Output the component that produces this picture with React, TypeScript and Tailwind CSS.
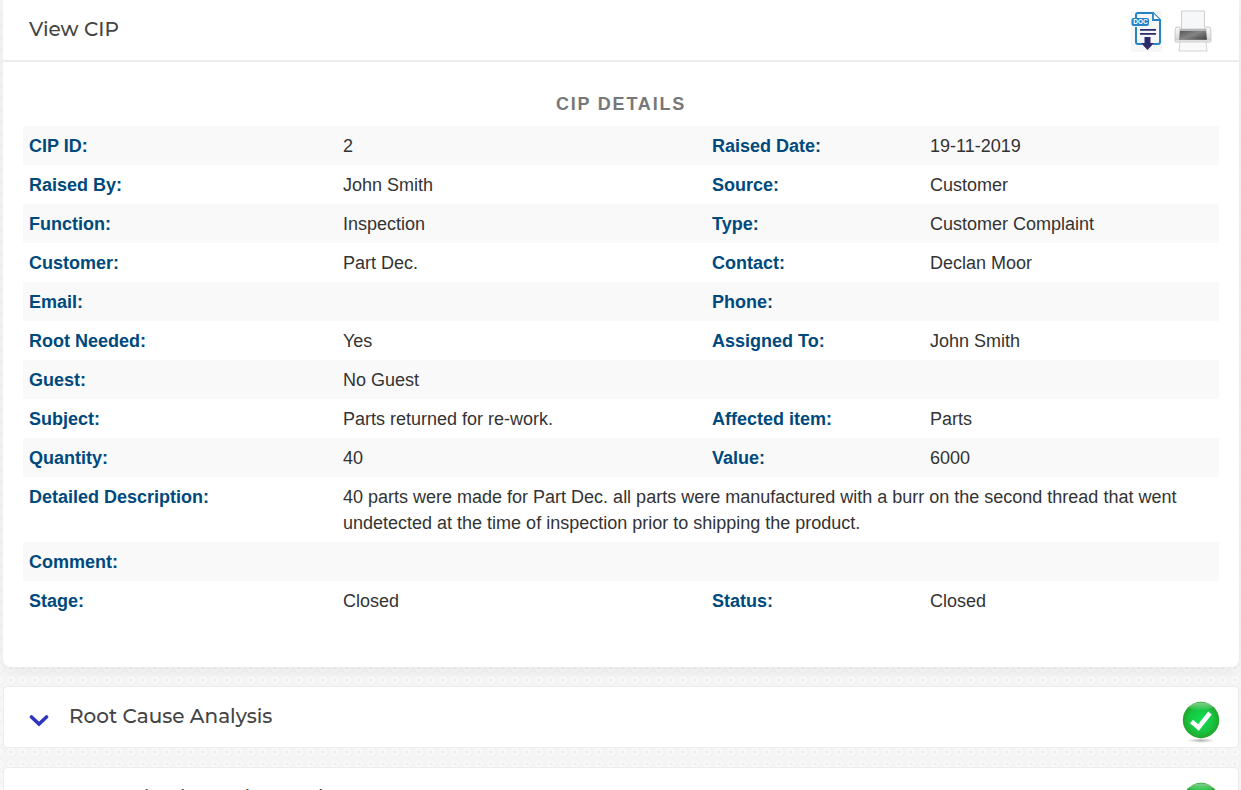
import React, { useState } from "react";

const details = [
  ["CIP ID:", "2", "Raised Date:", "19-11-2019"],
  ["Raised By:", "John Smith", "Source:", "Customer"],
  ["Function:", "Inspection", "Type:", "Customer Complaint"],
  ["Customer:", "Part Dec.", "Contact:", "Declan Moor"],
  ["Email:", "", "Phone:", ""],
  ["Root Needed:", "Yes", "Assigned To:", "John Smith"],
  ["Guest:", "No Guest"],
  ["Subject:", "Parts returned for re-work.", "Affected item:", "Parts"],
  ["Quantity:", "40", "Value:", "6000"],
  [
    "Detailed Description:",
    "40 parts were made for Part Dec. all parts were manufactured with a burr on the second thread that went undetected at the time of inspection prior to shipping the product.",
  ],
  ["Comment:", ""],
  ["Stage:", "Closed", "Status:", "Closed"],
];

const DocIcon = () => (
  <svg viewBox="0 0 31 41" className="h-[41px] w-[31px]" aria-hidden="true">
    <rect width="31" height="41" fill="#f7f7f8" />
    <path
      d="M5 8V4q0-2 2-2h15l7 7v22q0 2-2 2h-5M5 16v15q0 2 2 2h4"
      fill="none"
      stroke="#2583c6"
      strokeWidth="2"
    />
    <path d="M22 2v7h7" fill="#fff" stroke="#2583c6" strokeWidth="1.8" />
    <rect x="0.5" y="7" width="17.5" height="8" rx="2" fill="#2583c6" />
    <text
      x="9.5"
      y="13.3"
      textAnchor="middle"
      fontSize="6.5"
      fontWeight="700"
      fontFamily="Liberation Sans, sans-serif"
      fill="#fff"
    >
      DOC
    </text>
    <path d="M9 18.8h16M9 22.8h16" stroke="#2b2a6c" strokeWidth="1.7" />
    <path d="M13.5 26h6v6h3.5l-6.5 7-6.5-7h3.5z" fill="#2b2a6c" />
  </svg>
);

const PrinterIcon = () => (
  <svg viewBox="0 0 38 42" className="h-[42px] w-[38px]" aria-hidden="true">
    <defs>
      <linearGradient id="slot" x1="0" y1="0" x2="1" y2="1">
        <stop offset="0" stopColor="#4a4a4a" />
        <stop offset="0.5" stopColor="#858585" />
        <stop offset="1" stopColor="#3f3f3f" />
      </linearGradient>
      <linearGradient id="body" x1="0" y1="0" x2="0" y2="1">
        <stop offset="0" stopColor="#fafafa" />
        <stop offset="1" stopColor="#cfcfcf" />
      </linearGradient>
    </defs>
    <path d="M7.5 1h23v18h-23z" fill="#f6f7f9" stroke="#cfcfcf" />
    <path
      d="M2 17h4v4h26v-4h4l1 4v9q0 2-2 2H3q-2 0-2-2v-9z"
      fill="url(#body)"
      stroke="#c2c2c2"
      strokeWidth="0.8"
    />
    <path d="M6 19h26l1 11H5z" fill="url(#slot)" />
    <path d="M6 19h26v2H6z" fill="#b5b5b5" />
    <path d="M1 30h36v2H1z" fill="#ededed" stroke="#b9b9b9" strokeWidth="0.5" />
    <path d="M6 32h26l1 9H5z" fill="#fafafa" stroke="#d4d4d4" />
  </svg>
);

const ChevronIcon = () => (
  <svg viewBox="0 0 20 14" className="h-[14px] w-5" aria-hidden="true">
    <path
      d="M2.5 3l7.5 7 7.5-7"
      fill="none"
      stroke="#2f35bd"
      strokeWidth="3.6"
      strokeLinecap="round"
    />
  </svg>
);

const CheckIcon = () => (
  <svg viewBox="0 0 38 42" className="h-[42px] w-[38px]" aria-hidden="true">
    <defs>
      <radialGradient id="green" cx="0.5" cy="0.5" r="0.55">
        <stop offset="0" stopColor="#0be052" />
        <stop offset="0.6" stopColor="#18c440" />
        <stop offset="1" stopColor="#259a26" />
      </radialGradient>
      <linearGradient id="shine" x1="0" y1="0" x2="0" y2="1">
        <stop offset="0" stopColor="#fff" stopOpacity="0.45" />
        <stop offset="1" stopColor="#fff" stopOpacity="0" />
      </linearGradient>
      <radialGradient id="shade">
        <stop offset="0" stopColor="#000" stopOpacity="0.3" />
        <stop offset="1" stopColor="#000" stopOpacity="0" />
      </radialGradient>
    </defs>
    <ellipse cx="19" cy="39.5" rx="14" ry="2.5" fill="url(#shade)" />
    <circle cx="19" cy="19" r="18.2" fill="url(#green)" />
    <ellipse cx="19" cy="5.5" rx="12" ry="4" fill="url(#shine)" />
    <path d="M9.5 20.5l7 6L28 12" fill="none" stroke="#fff" strokeWidth="4.6" />
  </svg>
);

const Panel = (props: { title: string }) => {
  const [open, setOpen] = useState(false);

  return (
    <section className="rounded-sm border border-[#ececec] bg-white">
      <button
        type="button"
        aria-expanded={open}
        onClick={() => setOpen(!open)}
        className="flex h-[60px] w-full cursor-pointer items-center pr-[18px] pl-[25px] text-left"
      >
        <span className="pt-2">
          <ChevronIcon />
        </span>
        <span className="grow pb-[2px] pl-5 font-[Montserrat,Inter,sans-serif] text-xl font-medium text-[#444]">
          {props.title}
        </span>
        <span className="pt-[10px]">
          <CheckIcon />
        </span>
      </button>
    </section>
  );
};

const App = () => {
  return (
    <div className="h-screen overflow-hidden bg-[radial-gradient(circle,#eeeeee_1px,#f8f8f8_2px,#f8f8f8_4px,#f1f1f1_5px,#f5f5f5_6px)] bg-[length:12px_12px] bg-[position:5px_2px] pr-[2px] pl-[3px] font-['Liberation_Sans',Arial,sans-serif] text-[#333]">
      <main className="flex flex-col gap-[19px]">
        <section className="rounded-b-lg bg-white shadow-[0_4px_12px_rgba(0,0,0,0.06)]">
          <header className="flex h-[62px] items-start justify-between border-b-2 border-[#ededed] pr-[27px] pl-[26px]">
            <h1 className="pt-[15px] font-[Montserrat,Inter,sans-serif] text-xl font-medium text-[#444]">
              View CIP
            </h1>
            <div className="flex gap-3 pt-[10px]">
              <button type="button" aria-label="Download DOC" className="cursor-pointer">
                <DocIcon />
              </button>
              <button type="button" aria-label="Print" className="cursor-pointer">
                <PrinterIcon />
              </button>
            </div>
          </header>

          <div className="px-5 pt-[29px] pb-[47px]">
            <h2 className="pb-[9px] text-center text-lg leading-[26px] font-bold tracking-widest text-[#777]">
              CIP DETAILS
            </h2>
            <table className="w-full table-fixed text-lg leading-[26px]">
              <colgroup>
                <col className="w-[314px]" />
                <col />
                <col className="w-[218px]" />
                <col className="w-[295px]" />
              </colgroup>
              <tbody>
                {details.map(([label, value, label2, value2]) => (
                  <tr key={label} className="align-top odd:bg-[#f9f9f9]">
                    <th className="px-[6px] pt-[7px] pb-[6px] text-left font-bold text-[#00497d]">
                      {label}
                    </th>
                    <td
                      colSpan={label2 ? 1 : 3}
                      className="px-[6px] pt-[7px] pb-[6px]"
                    >
                      {value}
                    </td>
                    {label2 && (
                      <>
                        <th className="px-[6px] pt-[7px] pb-[6px] text-left font-bold text-[#00497d]">
                          {label2}
                        </th>
                        <td className="px-[6px] pt-[7px] pb-[6px]">{value2}</td>
                      </>
                    )}
                  </tr>
                ))}
              </tbody>
            </table>
          </div>
        </section>

        <Panel title="Root Cause Analysis" />
        <Panel title="Corrective (Containment)" />
      </main>
    </div>
  );
};

export default App;
